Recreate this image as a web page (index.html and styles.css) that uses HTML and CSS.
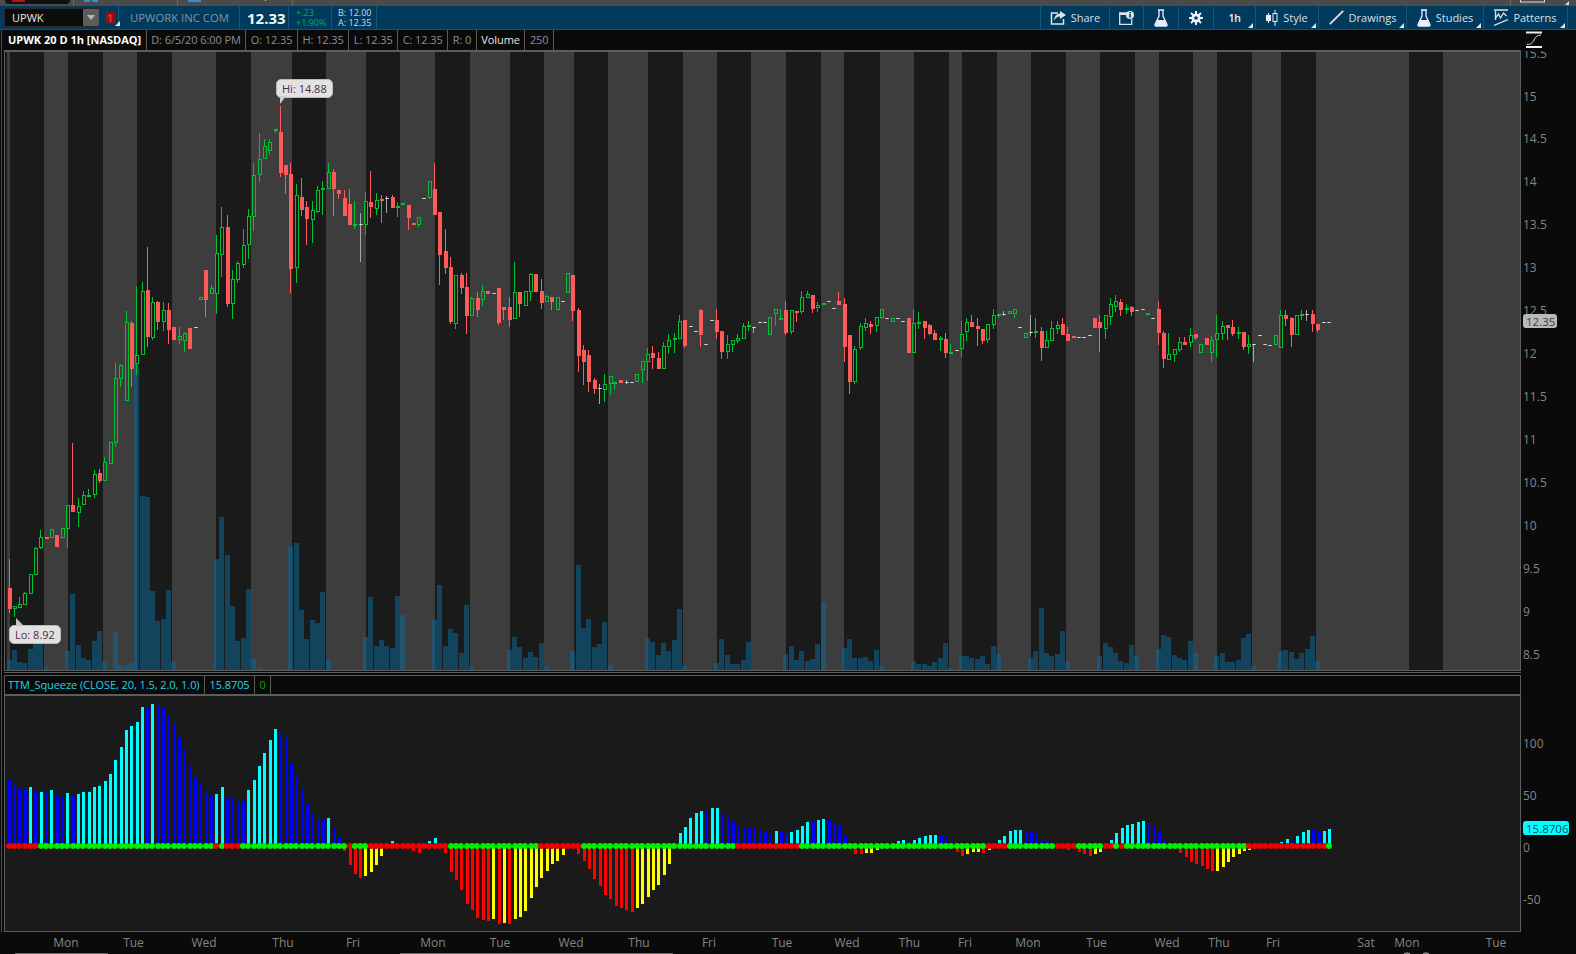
FILE: index.html
```html
<!DOCTYPE html>
<html lang="en">
<head>
<meta charset="utf-8">
<title>UPWK 20 D 1h [NASDAQ]</title>
<link rel="stylesheet" href="styles.css">
</head>
<body>
<div class="app">
  <svg class="tabstrip" viewBox="0 0 1576 6" aria-hidden="true">
    <rect x="5" y="-6" width="65" height="10" rx="4" fill="#111"/>
    <rect x="12" y="0" width="13" height="2" fill="#b01515"/>
    <rect x="73" y="0" width="1" height="6" fill="#666"/>
    <rect x="84" y="0" width="6" height="2" fill="#3a8fc8"/>
    <rect x="92" y="0" width="6" height="2" fill="#3a8fc8"/>
    <rect x="177" y="0" width="1" height="6" fill="#666"/>
    <rect x="188" y="0" width="13" height="2" fill="#3a8fc8"/>
    <rect x="265" y="0" width="1" height="1" fill="#ccc"/>
    <rect x="292" y="0" width="1" height="6" fill="#666"/>
    <rect x="1510" y="0" width="1" height="6" fill="#666"/>
    <rect x="1520.5" y="-2" width="24" height="4" fill="none" stroke="#ddd"/>
    <path d="M1565 5h4v-4z" fill="#ddd"/>
  </svg>

  <header class="toolbar">
    <div class="sym-group">
      <div class="symbol-box">
        <span class="symbol-text">UPWK</span>
        <span class="symbol-drop"><i class="drop-arrow"></i></span>
      </div>
      <div class="link-badge corner">1</div>
    </div>
    <div class="quote q-name">UPWORK INC COM</div>
    <div class="quote q-last">12.33</div>
    <div class="quote q-chg"><span>+.23</span><span>+1.90%</span></div>
    <div class="quote q-bid"><span>B: 12.00</span><span>A: 12.35</span></div>
    <nav class="tools">
      <div class="tool">
        <svg class="ico" width="16" height="14" viewBox="0 0 16 14"><path d="M8 2H1.5v11h12V8" fill="none" stroke="#dde4e9" stroke-width="1.5"/><path d="M10 0l6 4-6 4V5.6C7.5 5.6 5.5 6.8 4 9.5 4.3 5.6 6.6 2.8 10 2.6z" fill="#dde4e9"/></svg>
        <span>Share</span>
      </div>
      <div class="tool">
        <svg class="ico" width="15" height="14" viewBox="0 0 15 14"><path d="M9 2H.7v11.3h12V8" fill="none" stroke="#dde4e9" stroke-width="1.3"/><rect x="1" y="2" width="8" height="2" fill="#dde4e9"/><circle cx="11" cy="4" r="4" fill="#dde4e9"/><rect x="10.3" y="1" width="1.5" height="1.4" fill="#003a5c"/><rect x="10.3" y="3" width="1.5" height="3.6" fill="#003a5c"/></svg>
      </div>
      <div class="tool">
        <svg class="ico" width="14" height="18" viewBox="0 0 14 18"><path d="M4 1h6M5 1v6L1 15.5c-.4 1 .2 1.5 1 1.5h10c.8 0 1.4-.5 1-1.5L9 7V1" fill="none" stroke="#eef" stroke-width="1.3"/><path d="M3.5 11h7l2.5 6H1z" fill="#eef"/></svg>
      </div>
      <div class="tool">
        <svg class="ico" width="14" height="14" viewBox="0 0 14 14"><g stroke="#eef" stroke-width="2"><path d="M7 0v14M0 7h14M2 2l10 10M12 2L2 12"/></g><circle cx="7" cy="7" r="4.6" fill="#eef"/><circle cx="7" cy="7" r="1.8" fill="#003a5c"/></svg>
      </div>
      <div class="tool corner"><span class="tf">1h</span></div>
      <div class="tool corner">
        <svg class="ico" width="12" height="16" viewBox="0 0 12 16"><path d="M2.5 3v10M9 0v16" stroke="#eef" stroke-width="1"/><rect x="0" y="5" width="5" height="6" fill="#eef"/><rect x="7" y="3.5" width="4" height="8" fill="#003a5c" stroke="#eef"/></svg>
        <span>Style</span>
      </div>
      <div class="tool corner">
        <svg class="ico" width="15" height="15" viewBox="0 0 15 15"><path d="M.8 14.2L14.2.8" stroke="#dde4e9" stroke-width="1.8"/></svg>
        <span>Drawings</span>
      </div>
      <div class="tool corner">
        <svg class="ico" width="14" height="18" viewBox="0 0 14 18"><path d="M4 1h6M5 1v6L1 15.5c-.4 1 .2 1.5 1 1.5h10c.8 0 1.4-.5 1-1.5L9 7V1" fill="none" stroke="#eef" stroke-width="1.3"/><path d="M3.5 11h7l2.5 6H1z" fill="#eef"/></svg>
        <span>Studies</span>
      </div>
      <div class="tool corner">
        <svg class="ico" width="14" height="18" viewBox="0 0 14 18"><path d="M0 1h14M1.5 2v9M1.5 9l3-4 2 4 3-5 3 3M0 16.5L14 10.5" fill="none" stroke="#dde4e9" stroke-width="1.3"/></svg>
        <span>Patterns</span>
      </div>
    </nav>
  </header>

  <main class="workspace">
    <div class="rail"></div>
    <div class="study-bar upper">
      <span class="cell title">UPWK 20 D 1h [NASDAQ]</span>
      <span class="cell">D: 6/5/20 6:00 PM</span>
      <span class="cell">O: 12.35</span>
      <span class="cell">H: 12.35</span>
      <span class="cell">L: 12.35</span>
      <span class="cell">C: 12.35</span>
      <span class="cell">R: 0</span>
      <span class="cell label">Volume</span>
      <span class="cell">250</span>
    </div>
    <div class="axis-head">
      <svg width="18" height="18" viewBox="0 0 18 18"><path d="M1 1.5h16M1 16h16" stroke="#f0f0f0" stroke-width="2"/><path d="M2 13.5c4 0 5-1 7-4.5s3-5 7-5" fill="none" stroke="#d8d8d8" stroke-width="1"/></svg>
    </div>

    <div class="plot price-plot">
      <svg id="price" class="fill" viewBox="4 51 1517 620"></svg>
      <div class="bubble hi">Hi: 14.88</div>
      <div class="bubble lo">Lo: 8.92</div>
    </div>
    <svg id="priceAxis" class="axis price-axis" viewBox="1521 51 55 620"></svg>

    <div class="gap"></div>

    <div class="study-bar lower">
      <span class="cell ttm">TTM_Squeeze (CLOSE, 20, 1.5, 2.0, 1.0)</span>
      <span class="cell ttm">15.8705</span>
      <span class="cell zero">0</span>
    </div>
    <div class="axis-blank"></div>

    <div class="plot squeeze-plot">
      <svg id="squeeze" class="fill" viewBox="4 695 1517 237"></svg>
    </div>
    <svg id="squeezeAxis" class="axis squeeze-axis" viewBox="1521 695 55 237"></svg>

    <svg id="timeAxis" class="time-axis" viewBox="0 932 1576 22"></svg>
  </main>
</div>
<script src="chart.js"></script>
</body>
</html>
```

FILE: styles.css
```css
* { box-sizing: border-box; }
html, body { margin: 0; height: 100%; background: #0a0a0a; overflow: hidden; }
body { font-family: "Open Sans", "Liberation Sans", sans-serif; }

.app { width: 1576px; height: 954px; display: flex; flex-direction: column; }

.tabstrip { display: block; width: 1576px; height: 6px; background: #4b4b4b; flex: none; }

/* Toolbar */
.toolbar {
  height: 24px; flex: none; display: flex; align-items: stretch;
  background: #003a5c; color: #dde4e9; font-size: 11px;
  padding-left: 4px; border-bottom: 1px solid #2c4a5c;
}
.sym-group { width: 115px; display: flex; align-items: center; gap: 5px; border-right: 1px solid #14567a; position: relative; }
.symbol-box {
  width: 96px; height: 19px; background: #0c0c0c; border: 1px solid #2a2a2a; border-radius: 2px;
  display: flex; justify-content: space-between; align-items: center; padding-left: 7px;
  color: #e8e8e8; font-size: 11px;
}
.symbol-drop { width: 16px; height: 17px; background: #5c5c5c; display: flex; align-items: center; justify-content: center; border-radius: 1px; }
.drop-arrow { width: 0; height: 0; border: 4px solid transparent; border-top: 5px solid #b8b8b8; border-bottom: 0; }
.link-badge {
  width: 10px; height: 13px; background: #8c1010; border-radius: 2px; color: #c93a3a;
  font-size: 11px; font-weight: 700; line-height: 13px; text-align: center;
}
.quote { display: flex; flex-direction: column; justify-content: center; border-right: 1px solid #14567a; white-space: nowrap; }
.q-name { width: 121px; padding-left: 11px; color: #7d97a9; font-size: 11.3px; }
.q-last { width: 49px; padding-left: 7px; color: #f4f6f8; font-size: 15px; font-weight: 700; }
.q-chg { width: 43px; padding-left: 7px; color: #00b24a; font-size: 9px; line-height: 10px; }
.q-bid { width: 45px; padding-left: 6px; color: #cfd9e0; font-size: 9px; line-height: 10px; }

.tools {
  margin-left: auto; margin-right: 8px; display: grid;
  grid-template-columns: 69px 34px 35px 35px 42px 63px 88px 77px 85px;
}
.tool {
  position: relative; display: flex; align-items: center; justify-content: center; gap: 5px;
  border-left: 1px solid #14567a; font-size: 11px; color: #d7e0e6; white-space: nowrap;
}
.tool:last-child { border-right: 1px solid #14567a; }
.ico { flex: none; display: block; }
.tf { font-weight: 600; font-size: 10.5px; letter-spacing: -.3px; color: #eef; }
.corner { position: relative; }
.corner::after {
  content: ""; position: absolute; right: 2px; bottom: 1px; width: 0; height: 0;
  border-style: solid; border-width: 0 0 5px 5px; border-color: transparent transparent #dfe6ea transparent;
}
.link-badge.corner::after { right: -5px; bottom: -2px; }

/* Workspace */
.workspace {
  flex: 1; display: grid;
  grid-template-columns: 4px 1517px 55px;
  grid-template-rows: 21px 620px 4px 20px 237px 22px;
  min-height: 0;
  background: #0a0a0a;
}
.rail { grid-column: 1; grid-row: 1 / 6; background: linear-gradient(90deg, #0a0a0a 1px, #1a5a80 1px, #1a5a80 2px, #0a0a0a 2px); }

.study-bar {
  display: flex; align-items: stretch; background: #0a0a0a;
  border-bottom: 1px solid #5a5a5a; font-size: 11px; color: #8f8f8f; line-height: 20px;
  white-space: nowrap; min-width: 0;
}
.study-bar.upper { grid-column: 2; grid-row: 1; }
.study-bar.lower { grid-column: 2; grid-row: 4; border-top: 1px solid #5a5a5a; border-left: 1px solid #5a5a5a; border-right: 1px solid #5a5a5a; line-height: 18px; }
.cell { padding: 0 4.5px; border-right: 1px solid #5a5a5a; letter-spacing: -.08px; }
.cell.title { color: #fff; font-weight: 700; padding-left: 4px; letter-spacing: 0; }
.cell.label { color: #e6e6e6; }
.cell.ttm { color: #1ad6e4; padding-left: 3px; }
.cell.ttm + .cell.ttm { padding-left: 4.5px; }
.cell.zero { color: #00a800; }

.axis-head { grid-column: 3; grid-row: 1; padding: 1px 0 0 4px; }
.axis-head svg { display: block; }
.axis-blank { grid-column: 3; grid-row: 4; background: #0a0a0a; }

.plot { position: relative; overflow: hidden; outline: 1px solid #5e5e5e; outline-offset: -1px; }
.price-plot { grid-column: 2; grid-row: 2; }
.squeeze-plot { grid-column: 2; grid-row: 5; }
.gap { grid-column: 2; grid-row: 3; border-top: 1px solid #5e5e5e; margin-top: 1px; }
.fill { display: block; width: 100%; height: 100%; }
.axis { display: block; width: 55px; height: 100%; background: #0a0a0a; }
.price-axis { grid-column: 3; grid-row: 2; }
.squeeze-axis { grid-column: 3; grid-row: 5; }
.time-axis { grid-column: 1 / 4; grid-row: 6; display: block; width: 1576px; height: 22px; }

.bubble {
  position: absolute; background: #e2e2e2; color: #4b2b4b; font-size: 11px; line-height: 17px;
  padding: 0 5px; border-radius: 5px; border: 1px solid #bbb; white-space: nowrap;
}
.bubble::after { content: ""; position: absolute; width: 0; height: 0; border-style: solid; }
.bubble.hi { left: 272px; top: 28px; }
.bubble.hi::after { left: 3px; top: 16px; border-width: 8px 6px 0 0; border-color: #cfcfcf transparent transparent transparent; }
.bubble.lo { left: 5px; top: 574px; }
.bubble.lo::after { left: 6px; top: -8px; border-width: 8px 0 0 8px; border-color: transparent transparent transparent #c4c4c4; }

.t { font-family: "Open Sans", "Liberation Sans", sans-serif; font-size: 12px; fill: #858585; }
.tag-text { fill: #3a3a3a; font-size: 11.5px; }
.tag-cyan { fill: #0a5560; font-size: 11.5px; }
```

FILE: chart.js
```js
var NS = 'http://www.w3.org/2000/svg';

function el(parent, name, attrs, text) {
  var n = document.createElementNS(NS, name);
  for (var k in attrs) n.setAttribute(k, attrs[k]);
  if (text !== undefined) n.textContent = text;
  parent.appendChild(n);
  return n;
}
function box(parent, x, y, w, h, fill) {
  return el(parent, 'rect', { x: x, y: y, width: w, height: h, fill: fill, 'shape-rendering': 'crispEdges' });
}

var DARK = '#1a1a1a', LIGHT = '#3d3d3d';
var RED = '#ff5a5a', GREEN = '#00c22e', GRAY = '#a8a8a8';

/* session shading: start of each light band, then start of the dark band that ends it */
var LIGHT_BANDS = [[7,10],[44,68],[103,137],[172,216],[251,292],[326,366],[400,435],[470,510],[544,574],
  [608,648],[683,717],[751,786],[821,844],[880,914],[949,962],[997,1031],[1066,1100],[1135,1159],
  [1193,1217],[1252,1281],[1316,1409],[1443,1521]];

/* type, x, body top, body bottom, wick top, wick bottom (screen px) */
var CANDLES = [
['r',10,588,609,559,613],['g',15,606,609,606,617],['g',20,604,608,597,608],['g',25,593,605,592,605],['g',31,574,594,574,594],
['g',36,548,575,547,575],['g',41,537,548,530,549],['r',47,537,539],['g',52,529,538,529,538],['r',57,535,547],
['g',63,528,538,528,538],['g',68,505,529,505,548],['r',73,505,512,443,512],['g',79,506,513,498,527],['g',84,495,505,491,505],
['g',89,495,496,489,497],['g',95,474,495,470,498],['r',100,473,481,469,483],['g',105,462,481,457,481],['g',111,442,464,442,464],
['g',116,378,443,363,447],['g',121,365,379,364,387],['g',127,322,401,311,401],['r',132,323,369,321,387],['g',137,355,364,286,375],
['g',143,291,355,282,355],['r',148,290,337,247,347],['g',153,302,338,297,340],['r',158,302,322,301,330],['g',164,310,322,302,331],
['r',169,310,330,303,344],['r',174,327,340],['g',180,336,340,327,344],['g',185,333,341,332,352],['r',190,328,349],
['d',196,327],['g',201,297,300,297,300],['r',206,270,300,270,317],['g',212,288,294,285,294],['g',217,253,294,235,314],
['g',222,227,255,207,277],['r',228,227,304,215,307],['g',233,279,304,270,319],['g',238,263,280,261,283],['g',244,245,265,229,268],
['g',249,216,245,209,259],['g',254,175,217,163,231],['g',260,159,175,133,182],['g',265,146,159,139,159],['g',270,142,151,139,155],
['g',276,129,131,129,133],['r',281,132,173,106,177],['r',286,165,175,165,194],['r',291,174,269,163,293],['g',297,195,268,184,283],
['r',302,197,210,178,216],['r',307,207,219,201,245],['g',313,210,220,201,243],['g',318,190,212,186,213],['g',323,188,190,181,215],
['g',329,172,189,163,189],['r',334,172,189,169,216],['r',339,190,194,190,199],['r',345,198,216,190,216],['r',350,204,225,189,225],
['g',355,224,225,201,229],['d',361,224,213,262],['g',366,201,225,192,235],['r',371,202,207,171,218],['g',377,200,209,193,215],
['r',382,199,201,195,223],['d',387,198,196,213],['r',393,197,208,195,208],['g',398,206,207,202,217],['g',403,203,205,203,205],
['r',409,205,218,205,230],['r',414,223,225],['g',419,217,225,217,227],['d',424,198],['g',430,181,198,181,199],
['r',435,189,215,163,215],['r',440,212,255,212,285],['r',446,251,268,229,274],['r',451,267,322,257,324],['g',456,275,324,275,329],
['r',462,275,288,273,294],['r',467,287,316,273,334],['g',472,298,316,297,316],['r',478,298,310,292,317],['g',483,291,300,285,306],
['r',488,291,294],['d',494,293],['r',499,288,323,288,325],['r',504,307,310,307,320],['r',510,307,320,297,327],
['g',515,292,319,262,319],['r',520,292,304,292,317],['g',526,291,306,291,306],['g',531,274,292,273,301],['r',536,274,292],
['r',542,291,303,279,309],['g',547,296,302,295,302],['r',552,297,302,297,310],['g',558,297,310,297,310],['d',563,301],
['g',568,273,293,273,293],['r',573,275,311,275,321],['r',579,310,356,308,372],['r',584,350,362,345,385],['r',589,355,382,350,392],
['r',595,380,389,378,394],['d',600,388,384,404],['g',605,384,390,374,402],['g',611,376,384,376,395],['g',615,382,383,382,390],
['r',621,380,383],['d',627,382,380,384],['d',632,382],['g',637,374,382,374,382],['g',643,361,370,361,383],
['g',648,354,362,348,381],['r',653,353,358,346,369],['r',659,358,369,352,369],['g',664,346,369,342,369],['g',669,340,347,334,354],
['g',675,338,340,333,353],['g',680,321,339,315,339],['r',685,320,346,320,348],['d',691,326],['d',696,331],
['r',701,310,335,309,347],['d',706,344],['d',712,320],['r',717,320,332,309,339],['r',722,331,352,331,359],
['g',728,344,352,335,359],['g',733,340,345,340,352],['g',738,338,341,334,343],['g',744,326,339,323,339],['g',749,325,327,321,331],
['d',754,327,327,333],['d',760,322],['d',765,322],['g',770,317,335,317,335],['g',776,309,314,309,326],
['g',781,318,319,309,319],['r',786,310,333,301,335],['g',792,310,332,310,334],['r',797,311,313,311,322],['g',802,297,312,291,314],
['g',808,294,298,291,298],['r',813,295,309,295,313],['g',818,305,308,302,312],['f',824,303,305],['d',829,301],
['d',834,308],['r',839,301,305,292,305],['r',845,304,347,298,362],['r',850,335,382,335,394],['g',855,349,382,346,384],
['g',861,326,348,323,350],['g',866,323,328,318,331],['r',871,324,327,321,334],['g',877,317,326,317,332],['g',882,309,318,309,319],
['d',887,318],['g',893,318,322,318,322],['d',898,318],['d',903,321],['r',909,318,353],
['g',914,323,353,309,353],['g',919,322,324,312,329],['r',925,321,328,321,339],['r',930,325,334,324,335],['r',935,333,340,330,340],
['g',941,338,340,336,351],['r',946,339,353,333,358],['g',951,352,354,344,354],['d',957,350],['g',962,334,349,321,357],
['g',967,322,332,318,341],['r',972,322,327,315,327],['r',978,326,329,318,346],['r',983,329,341,329,344],['g',988,324,340,324,343],
['g',994,315,325,309,329],['g',999,314,316,314,318],['d',1004,314,311,316],['g',1010,311,314,311,314],['g',1015,309,314,309,318],
['d',1020,327],['g',1026,333,338,333,338],['d',1031,332,315,336],['g',1036,331,333,318,338],['r',1042,331,348,327,361],
['g',1047,340,348,331,348],['g',1052,328,341,321,341],['g',1058,325,329,321,334],['r',1063,324,335,318,335],['r',1068,334,341,327,341],
['r',1074,336,338],['d',1079,337],['d',1084,337],['d',1090,335],['r',1095,318,328],
['r',1100,322,328,315,352],['g',1106,315,329,315,339],['g',1111,304,317,298,325],['g',1116,301,307,295,312],['r',1121,302,310,299,316],
['g',1127,308,310,304,314],['r',1132,307,312,306,316],['d',1137,310],['d',1143,309],['f',1148,313,315],
['d',1153,318],['r',1159,309,333,301,345],['r',1164,333,359,331,368],['g',1169,354,360,333,360],['g',1175,349,355,349,362],
['g',1180,342,350,337,352],['r',1185,342,345,337,345],['g',1191,335,343,328,347],['r',1196,334,338,334,340],['g',1201,344,353,344,353],
['r',1207,338,345],['g',1212,340,353,336,362],['g',1217,333,340,315,357],['g',1223,326,334,321,340],['r',1228,325,328,325,340],
['r',1233,327,334,320,336],['g',1239,332,334,327,339],['r',1244,332,347,332,350],['g',1249,344,347,335,354],['d',1254,344,344,362],
['d',1260,335],['d',1265,344],['d',1270,345],['g',1276,335,345,335,345],['g',1281,315,348,310,348],
['r',1286,315,319,310,326],['r',1292,318,335,317,347],['g',1297,315,335,315,335],['g',1302,314,316,310,320],['d',1307,314,310,321],
['r',1313,314,324,310,332],['r',1318,324,330,324,332],['d',1324,322],['d',1329,322]
];

/* left edge, height of each volume bar */
var VOLUME = [
[7,11],[12,21],[17,9],[22,8],[28,22],[33,28],[38,28],[44,4],[65,20],[70,77],[76,26],[81,13],[86,11],[92,30],[97,40],[102,10],
[113,39],[118,6],[124,6],[129,8],[134,308],[140,175],[145,174],[150,80],[155,50],[161,52],[166,81],[171,9],[182,1],[203,1],[208,1],
[214,112],[219,154],[225,116],[230,65],[235,30],[241,33],[246,82],[251,12],[257,3],[262,1],[267,1],[283,2],[288,125],[294,128],
[299,61],[304,32],[310,51],[315,48],[320,79],[326,11],
[363,34],[368,74],[374,25],[379,31],[384,25],[390,23],[395,75],[400,56],[432,51],[437,86],[443,25],[448,42],[453,38],[459,18],
[464,66],[469,5],[507,21],[512,34],[517,24],[523,13],[528,19],[533,14],[539,28],[544,5],[570,20],[576,106],[581,43],[586,52],
[592,24],[597,27],[602,49],[608,6],[645,33],[650,29],[656,16],[661,28],[666,20],[672,31],[677,62],[682,5],[714,8],[719,32],
[725,16],[730,7],[735,7],[741,11],[746,29],[751,2],[783,17],[789,25],[794,11],[799,20],[805,10],[810,12],[815,27],[821,69],
[842,23],[847,32],[852,13],[858,13],[863,14],[868,10],[874,21],[879,5],[911,10],[916,7],[922,7],[927,5],[932,9],[938,13],
[943,28],[948,3],[959,15],[964,15],[969,13],[975,12],[980,15],[985,7],[991,25],[996,17],[1028,13],[1033,20],[1039,63],[1044,18],
[1049,15],[1055,17],[1060,40],[1065,10],[1097,15],[1103,28],[1108,24],[1113,18],[1118,10],[1124,8],[1129,26],[1134,15],[1156,22],
[1161,36],[1166,34],[1172,16],[1177,13],[1182,11],[1188,30],[1193,18],[1214,15],[1220,18],[1225,9],[1230,9],[1236,11],[1241,33],
[1246,37],[1251,5],[1278,20],[1283,21],[1289,19],[1294,12],[1299,18],[1305,22],[1310,35],[1315,10]
];

/* squeeze histogram by bar index: value in px, colour code */
var HIST = [
[66,'b'],[61,'b'],[58,'b'],[56,'b'],[59,'c'],[54,'b'],[54,'c'],[54,'b'],[56,'c'],[51,'b'],[48,'b'],[53,'c'],[51,'b'],[52,'c'],[54,'c'],[54,'c'],
[59,'c'],[60,'c'],[65,'c'],[72,'c'],[86,'c'],[99,'c'],[116,'c'],[120,'c'],[124,'c'],[139,'c'],[138,'b'],[142,'c'],[141,'b'],[138,'b'],[131,'b'],[122,'b'],
[109,'b'],[96,'b'],[80,'b'],[68,'b'],[62,'b'],[55,'b'],[50,'b'],[52,'c'],[59,'c'],[48,'b'],[48,'b'],[45,'b'],[44,'b'],[56,'c'],[66,'c'],[80,'c'],
[93,'c'],[106,'c'],[117,'c'],[113,'b'],[109,'b'],[82,'b'],[70,'b'],[56,'b'],[43,'b'],[33,'b'],[27,'b'],[26,'b'],[28,'c'],[19,'b'],[8,'b'],
[-5,'r'],[-19,'r'],[-28,'r'],[-32,'r'],[-30,'y'],[-26,'y'],[-19,'y'],[-10,'y'],[0],[5,'c'],[0],[0],[0],[-5,'r'],[-7,'r'],[0],[5,'c'],[8,'c'],[0],[-7,'r'],
[-26,'r'],[-34,'r'],[-44,'r'],[-58,'r'],[-64,'r'],[-72,'r'],[-74,'r'],[-75,'r'],[-73,'y'],[-78,'r'],[-77,'y'],[-78,'r'],[-73,'y'],[-71,'y'],[-65,'y'],[-52,'y'],
[-41,'y'],[-32,'y'],[-25,'y'],[-18,'y'],[-15,'y'],[-9,'y'],[0],[0],[-8,'r'],[-15,'r'],[-23,'r'],[-33,'r'],[-40,'r'],[-49,'r'],[-53,'r'],[-60,'r'],
[-62,'r'],[-64,'r'],[-66,'r'],[-62,'y'],[-58,'y'],[-51,'y'],[-44,'y'],[-39,'y'],[-29,'y'],[-18,'y'],[0],[13,'c'],[19,'c'],[28,'c'],[33,'c'],[35,'c'],
[34,'b'],[38,'c'],[38,'c'],[32,'b'],[28,'b'],[24,'b'],[20,'b'],[19,'b'],[19,'b'],[18,'b'],[17,'b'],[14,'b'],[13,'b'],[15,'c'],[14,'b'],[13,'b'],[14,'c'],[16,'c'],
[20,'c'],[24,'c'],[24,'b'],[26,'c'],[27,'c'],[26,'b'],[23,'b'],[21,'b'],[11,'b'],[0],[-8,'r'],[-8,'r'],[-7,'y'],[-7,'y'],[-4,'y'],[0],[0],[0],
[5,'c'],[6,'c'],[0],[6,'c'],[8,'c'],[10,'c'],[11,'c'],[11,'c'],[11,'b'],[8,'b'],[0],[-6,'r'],[-10,'r'],[-8,'y'],[-6,'y'],[-6,'y'],[-7,'r'],[-4,'y'],[0],
[6,'c'],[10,'c'],[15,'c'],[16,'c'],[16,'c'],[15,'b'],[14,'b'],[12,'b'],[7,'b'],[4,'b'],[0],[0],[0],[-4,'r'],[-2,'r'],[-6,'r'],[-8,'r'],[-10,'r'],[-8,'y'],[-6,'y'],[0],
[6,'c'],[13,'c'],[18,'c'],[21,'c'],[22,'c'],[24,'c'],[25,'c'],[23,'b'],[20,'b'],[15,'b'],[7,'b'],[0],[0],[-7,'r'],[-11,'r'],[-16,'r'],[-18,'r'],[-20,'r'],[-23,'r'],[-25,'r'],
[-25,'y'],[-21,'y'],[-16,'y'],[-11,'y'],[-8,'y'],[-5,'y'],[-4,'y'],[0],[0],[0],[0],[0],[4,'c'],[7,'c'],[6,'b'],[10,'c'],[14,'c'],[16,'c'],[16,'b'],[15,'b'],[15,'c'],[17,'c']
];
var COLORS = { b: '#0000ff', c: '#00ffff', r: '#ff0000', y: '#ffff00' };

/* squeeze-dot runs: first bar of each run, alternating from red */
var DOT_RUNS = [0,6,39,40,41,44,64,65,68,83,100,108,137,149,184,188,197,201,206,208,209,210,233,248];

function barX(i) { return Math.round(8.7 + 5.325 * i); }

function drawPrice() {
  var svg = document.getElementById('price');
  box(svg, 4, 51, 1517, 620, DARK);
  LIGHT_BANDS.forEach(function (b) { box(svg, b[0], 51, b[1] - b[0], 620, LIGHT); });

  VOLUME.forEach(function (v) { box(svg, v[0], 671 - v[1], 5, v[1], 'rgba(13,105,150,.55)'); });

  CANDLES.forEach(function (c) {
    var t = c[0], x = Math.round(c[1] - 2);
    if (t === 'd') {
      if (c.length > 3) box(svg, x + 1, c[3], 1, c[4] - c[3], GRAY);
      box(svg, x, c[2], 4, 1, GRAY);
      box(svg, x + 1, c[2], 2, 1, '#dcdcdc');
      return;
    }
    var top = c[2], bot = c[3], wt = c.length > 4 ? c[4] : top, wb = c.length > 5 ? c[5] : bot;
    var col = t === 'r' ? RED : GREEN;
    if (wt < top) box(svg, x + 1, wt, 1, top - wt, col);
    if (wb > bot) box(svg, x + 1, bot, 1, wb - bot, col);
    if (t === 'g' && bot - top > 2) {
      el(svg, 'rect', { x: x + 0.5, y: top + 0.5, width: 3, height: bot - top - 1, fill: 'none', stroke: col, 'shape-rendering': 'crispEdges' });
    } else {
      box(svg, x, top, 4, Math.max(bot - top, 2), col);
    }
  });
}

function drawPriceAxis() {
  var svg = document.getElementById('priceAxis');
  for (var p = 15.5; p >= 8.5; p -= 0.5) {
    var y = 96 + (15 - p) * 85.92;
    el(svg, 'text', { x: 1523, y: y + 4.5, 'class': 't' }, String(p));
  }
  el(svg, 'rect', { x: 1523, y: 314, width: 34, height: 14, rx: 3, fill: '#b9b9b9' });
  el(svg, 'text', { x: 1526, y: 325.5, 'class': 't tag-text' }, '12.35');
}

function drawSqueeze() {
  var svg = document.getElementById('squeeze');
  box(svg, 4, 695, 1517, 237, DARK);
  var zero = 846;
  HIST.forEach(function (h, i) {
    if (!h[0]) return;
    var x = barX(i) - 1;
    if (h[0] > 0) box(svg, x, zero - h[0], 3, h[0], COLORS[h[1]]);
    else box(svg, x, zero, 3, -h[0], COLORS[h[1]]);
  });
  var run = -1, green = true;
  for (var i = 0; i < 249; i++) {
    if (run + 1 < DOT_RUNS.length && DOT_RUNS[run + 1] === i) { run++; green = run % 2 === 1; }
    el(svg, 'circle', { cx: barX(i), cy: zero, r: 3, fill: green ? '#00f000' : '#f00000' });
  }
}

function drawSqueezeAxis() {
  var svg = document.getElementById('squeezeAxis');
  [[100, 743], [50, 795], [0, 847], [-50, 899]].forEach(function (t) {
    el(svg, 'text', { x: 1523, y: t[1] + 4.5, 'class': 't' }, String(t[0]));
  });
  el(svg, 'rect', { x: 1523, y: 821, width: 46, height: 14, rx: 3, fill: '#00ffff' });
  el(svg, 'text', { x: 1526, y: 832.5, 'class': 't tag-cyan' }, '15.8706');
}

function drawTimeAxis() {
  var svg = document.getElementById('timeAxis');
  [['Mon',66],['Tue',133.5],['Wed',204],['Thu',283],['Fri',353],['Mon',433],['Tue',500],['Wed',571],['Thu',639],['Fri',709],
   ['Tue',782],['Wed',847],['Thu',909.5],['Fri',965],['Mon',1028],['Tue',1096.5],['Wed',1167],['Thu',1219],['Fri',1273],
   ['Sat',1366],['Mon',1407],['Tue',1496]].forEach(function (l) {
    el(svg, 'text', { x: l[1], y: 946.5, 'text-anchor': 'middle', 'class': 't' }, l[0]);
  });
  box(svg, 15, 953, 93, 1, '#6a6a6a');
  box(svg, 400, 953, 273, 1, '#6a6a6a');
  el(svg, 'circle', { cx: 1407, cy: 958, r: 5, fill: 'none', stroke: '#ccc' });
  el(svg, 'circle', { cx: 1426, cy: 958, r: 5, fill: 'none', stroke: '#ccc' });
}

drawPrice();
drawPriceAxis();
drawSqueeze();
drawSqueezeAxis();
drawTimeAxis();
```
